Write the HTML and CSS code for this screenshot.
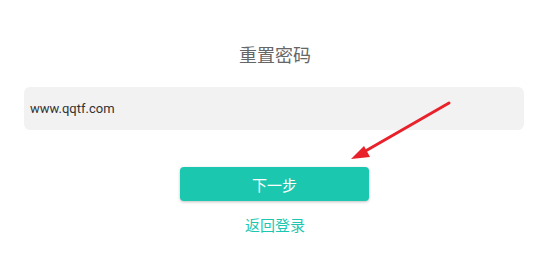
FILE: index.html
```html
<!DOCTYPE html>
<html lang="zh-CN">
<head>
<meta charset="utf-8">
<title>重置密码</title>
<link rel="stylesheet" href="styles.css">
</head>
<body>
<div class="page">
  <h1 class="title">重置密码</h1>
  <div class="field">www.qqtf.com</div>
  <div class="actions">
    <button class="btn">下一步</button>
    <a class="link" href="#">返回登录</a>
  </div>
  <svg class="arrow" width="550" height="261" viewBox="0 0 550 261" xmlns="http://www.w3.org/2000/svg">
    <line x1="449" y1="103" x2="362" y2="153" stroke="#e8212b" stroke-width="3" stroke-linecap="round"/>
    <polygon points="351,159 364,146 370,157" fill="#e8212b"/>
  </svg>
</div>
</body>
</html>
```
FILE: styles.css
```css
html, body {
  margin: 0;
  padding: 0;
  background: #ffffff;
}
.page {
  position: relative;
  width: 550px;
  height: 261px;
  display: flex;
  flex-direction: column;
  font-family: Roboto, "Noto Sans CJK SC", sans-serif;
}
.title {
  margin: 44px 0 0;
  height: 24px;
  line-height: 24px;
  font-size: 18px;
  font-weight: 400;
  color: #666666;
  text-align: center;
}
.field {
  margin: 19px 26px 0 24px;
  height: 43px;
  line-height: 43px;
  padding-left: 6px;
  background: #f2f2f2;
  border-radius: 6px;
  font-size: 13px;
  color: #333333;
}
.actions {
  display: flex;
  flex-direction: column;
  align-items: center;
  margin-top: 37px;
}
.btn {
  width: 189px;
  height: 34px;
  border: none;
  border-radius: 4px;
  background: #1cc7b0;
  color: #ffffff;
  font-family: Roboto, "Noto Sans CJK SC", sans-serif;
  font-size: 15px;
  box-shadow: 0 1px 3px rgba(0, 0, 0, 0.25);
  padding: 0;
  margin-left: -1px;
}
.link {
  margin-top: 15px;
  line-height: 20px;
  font-size: 15px;
  color: #1cc7b0;
  text-decoration: none;
}
.arrow {
  position: absolute;
  left: 0;
  top: 0;
  pointer-events: none;
}
```
